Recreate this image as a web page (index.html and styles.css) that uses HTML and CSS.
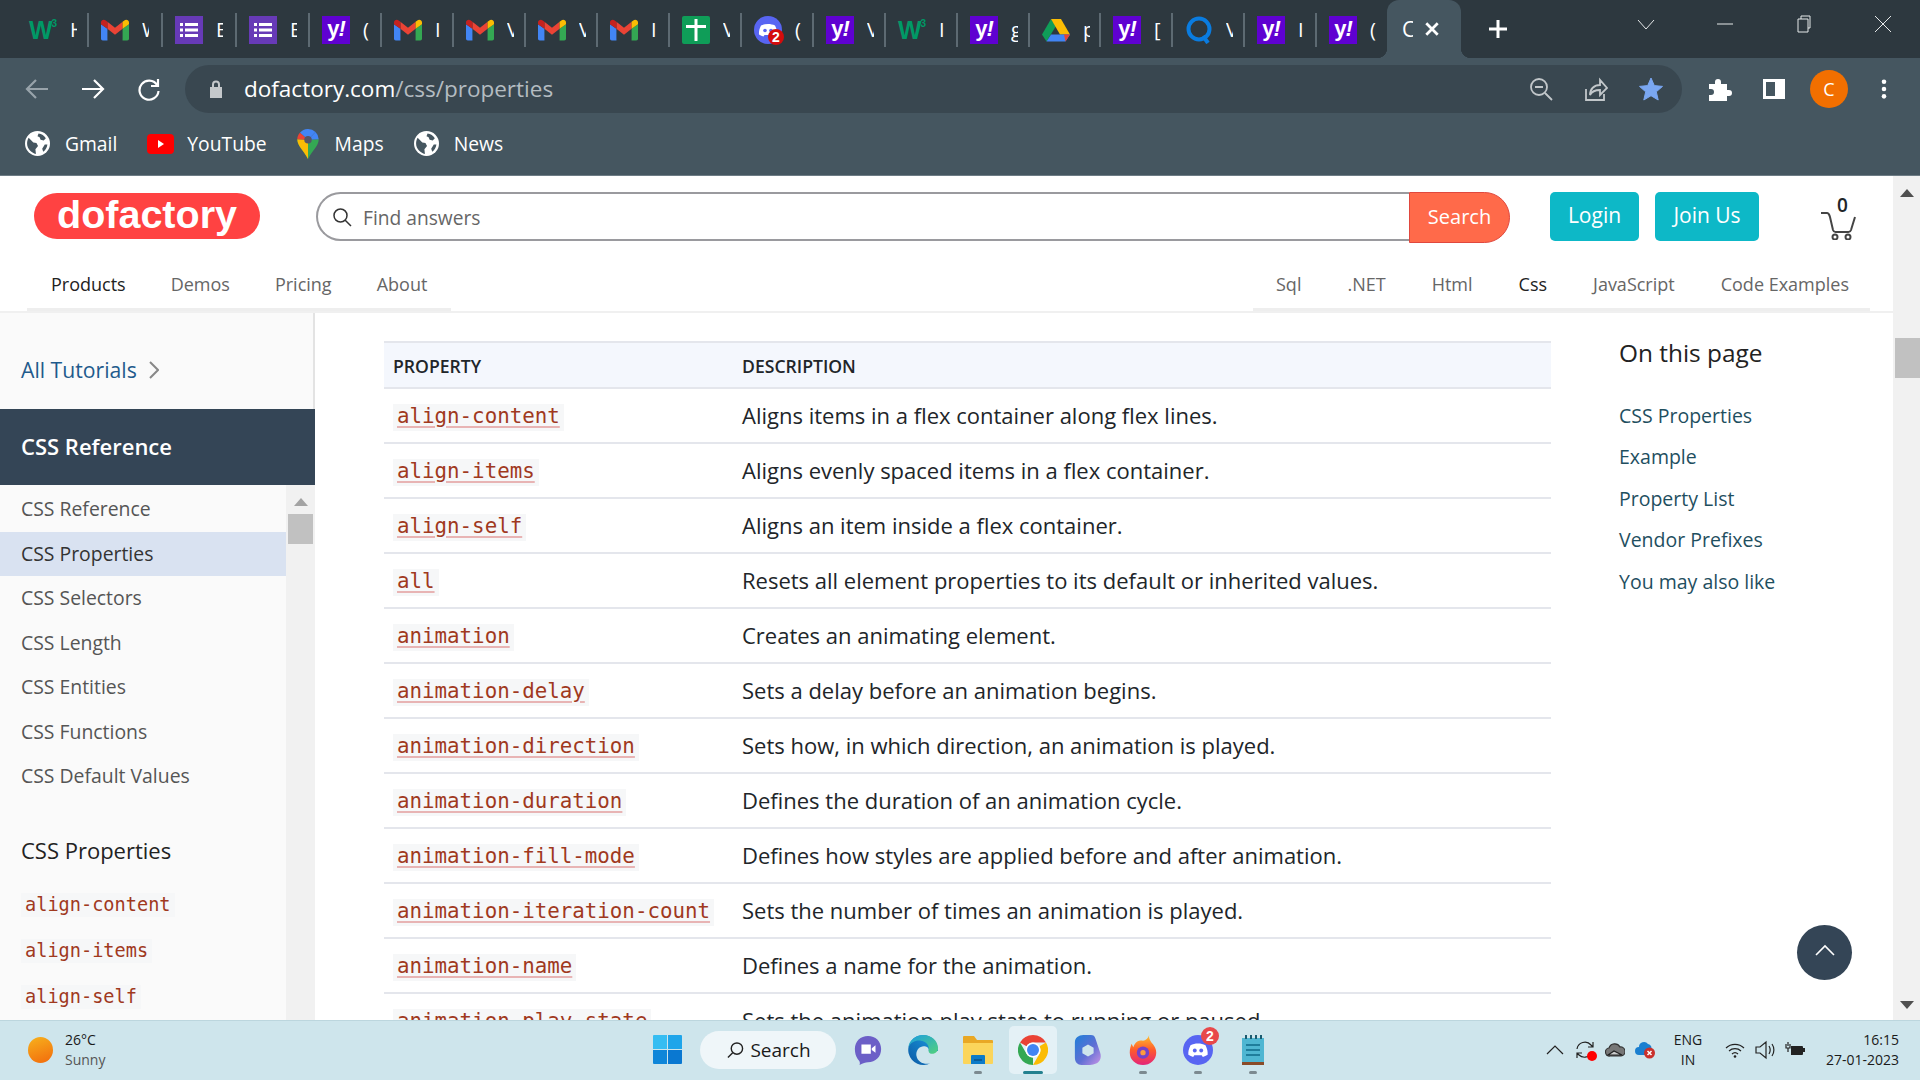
FILE: index.html
```html
<!DOCTYPE html>
<html lang="en">
<head>
    <meta charset="UTF-8">
    <title>CSS Properties - dofactory</title>
    <link rel="stylesheet" href="styles.css">
</head>
<body>
<svg class="defs" width="0" height="0">
    <symbol id="i-gmail" viewBox="0 0 24 18">
        <path fill="#4285f4" d="M0 4v12.5A1.5 1.5 0 0 0 1.5 18h4V8z"/>
        <path fill="#34a853" d="M18.5 8v10h4a1.5 1.5 0 0 0 1.5-1.5V4z"/>
        <path fill="#ea4335" d="M5.5 8 12 13l6.5-5V2L12 7 5.5 2z"/>
        <path fill="#fbbc04" d="M18.5 2v6L24 4V2.5C24 .5 21.5-.5 20 .8z"/>
        <path fill="#c5221f" d="M0 4l5.5 4V2L4 .8C2.5-.5 0 .5 0 2.5z"/>
    </symbol>
    <symbol id="i-forms" viewBox="0 0 28 28">
        <rect width="28" height="28" fill="#673ab7"/>
        <path fill="#fff" d="M5 7h3v3H5zM10 7h13v3H10zM5 12.5h3v3H5zM10 12.5h13v3H10zM5 18h3v3H5zM10 18h13v3H10z"/>
    </symbol>
    <symbol id="i-sheets" viewBox="0 0 28 28">
        <rect width="28" height="28" rx="2" fill="#0f9d58"/>
        <path fill="#fff" d="M4 9h20v3H4zM12.5 3h3v22h-3z"/>
    </symbol>
    <symbol id="i-discord" viewBox="0 0 28 28">
        <circle cx="14" cy="14" r="14" fill="#5865f2"/>
        <path fill="#fff" d="M7 9.5c4-2 10-2 14 0 1.5 3 2.3 6 2 9-1.500 1-3 1.700-4.500 2l-1-1.500h-7l-1 1.500c-1.500-.3-3-1-4.500-2-.3-3 .5-6 2-9z"/>
        <circle cx="11" cy="14.500" r="1.800" fill="#5865f2"/>
        <circle cx="17" cy="14.500" r="1.800" fill="#5865f2"/>
    </symbol>
    <symbol id="i-globe" viewBox="0 0 24 24">
        <circle cx="12" cy="12" r="12" fill="#fff"/>
        <path fill="#455660" d="M3.500 6.500 8 11l3 .5 1.500 3-2.500 3 .5 4.500C6 21 2 17 2 12c0-2 .5-4 1.500-5.500zM13 2.500c3 .3 5.500 2 7 4.500l-2 2-3-.5-1-2.500-2-1zM21.500 13c-.3 3-2 5.500-4 7l-1-3 2.500-4z"/>
    </symbol>
    <symbol id="i-drive" viewBox="0 0 28 26">
        <path fill="#0f9d58" d="M9 2 0 17.500l4.500 7L14 9z"/>
        <path fill="#fbbc04" d="M19 2H9l9 15.500h10z"/>
        <path fill="#4285f4" d="M4.500 24.500h19l4.500-7H9z"/>
        <path fill="#ea4335" d="M23.500 24.500 28 17.500h-6z"/>
    </symbol>
    <symbol id="i-q" viewBox="0 0 28 28">
        <circle cx="14" cy="13" r="10.500" fill="none" stroke="#0a7ce0" stroke-width="4"/>
        <path stroke="#0a7ce0" stroke-width="4" d="M18 20l5 7"/>
    </symbol>
    <symbol id="i-chrome" viewBox="0 0 48 48">
        <path fill="#ea4335" d="M24 4A20 20 0 0 1 41.320 14H24a10 10 0 0 0-8.660 5L6.680 14A20 20 0 0 1 24 4z"/>
        <path fill="#fbbc04" transform="rotate(120 24 24)" d="M24 4A20 20 0 0 1 41.320 14H24a10 10 0 0 0-8.660 5L6.680 14A20 20 0 0 1 24 4z"/>
        <path fill="#34a853" transform="rotate(240 24 24)" d="M24 4A20 20 0 0 1 41.320 14H24a10 10 0 0 0-8.660 5L6.680 14A20 20 0 0 1 24 4z"/>
        <circle cx="24" cy="24" r="10" fill="#fff"/>
        <circle cx="24" cy="24" r="8" fill="#4285f4"/>
    </symbol>
</svg>

<div class="screen">
    <div class="tabstrip">
        <div class="tab"><span class="w3">W<sup>3</sup></span><span class="tab-title">H</span></div>
        <div class="tab w74"><svg class="fav gm"><use href="#i-gmail"/></svg><span class="tab-title">W</span></div>
        <div class="tab w74"><svg class="fav"><use href="#i-forms"/></svg><span class="tab-title">E</span></div>
        <div class="tab w73"><svg class="fav"><use href="#i-forms"/></svg><span class="tab-title">E</span></div>
        <div class="tab"><span class="yahoo">y<i>!</i></span><span class="tab-title">(</span></div>
        <div class="tab"><svg class="fav gm"><use href="#i-gmail"/></svg><span class="tab-title">I</span></div>
        <div class="tab"><svg class="fav gm"><use href="#i-gmail"/></svg><span class="tab-title">V</span></div>
        <div class="tab"><svg class="fav gm"><use href="#i-gmail"/></svg><span class="tab-title">V</span></div>
        <div class="tab"><svg class="fav gm"><use href="#i-gmail"/></svg><span class="tab-title">I</span></div>
        <div class="tab"><svg class="fav"><use href="#i-sheets"/></svg><span class="tab-title">V</span></div>
        <div class="tab"><span class="discord-fav"><svg class="fav"><use href="#i-discord"/></svg><b class="fav-badge">2</b></span><span class="tab-title">(</span></div>
        <div class="tab"><span class="yahoo">y<i>!</i></span><span class="tab-title">V</span></div>
        <div class="tab"><span class="w3">W<sup>3</sup></span><span class="tab-title">I</span></div>
        <div class="tab"><span class="yahoo">y<i>!</i></span><span class="tab-title">g</span></div>
        <div class="tab w71"><svg class="fav"><use href="#i-drive"/></svg><span class="tab-title">p</span></div>
        <div class="tab"><span class="yahoo">y<i>!</i></span><span class="tab-title">[</span></div>
        <div class="tab"><svg class="fav"><use href="#i-q"/></svg><span class="tab-title">V</span></div>
        <div class="tab"><span class="yahoo">y<i>!</i></span><span class="tab-title">I</span></div>
        <div class="tab"><span class="yahoo">y<i>!</i></span><span class="tab-title">(</span></div>
        <div class="tab-active">
            <span class="tab-title">C</span>
            <svg class="tab-close" viewBox="0 0 14 14"><path d="M2 2l10 10M12 2 2 12"/></svg>
        </div>
        <svg class="new-tab" viewBox="0 0 20 20"><path d="M10 1v18M1 10h18"/></svg>
        <div class="win-controls">
            <svg viewBox="0 0 20 20"><path d="M2 6l8 9 8-9"/></svg>
            <svg viewBox="0 0 20 20"><path d="M2 10h16"/></svg>
            <svg viewBox="0 0 20 20"><path d="M4 5h10v13H4zM7 5V2h9v12h-2"/></svg>
            <svg viewBox="0 0 20 20"><path d="M2 2l16 16M18 2 2 18"/></svg>
        </div>
    </div>

    <div class="toolbar">
        <svg class="tb-btn dim" viewBox="0 0 24 24"><path d="M23 12H2M11 3l-9 9 9 9"/></svg>
        <svg class="tb-btn" viewBox="0 0 24 24"><path d="M1 12h21M13 3l9 9-9 9"/></svg>
        <svg class="tb-btn" viewBox="0 0 24 24"><path d="M20 8a9.500 9.500 0 1 0 1.500 6M21 2v7h-7"/></svg>
        <div class="omnibox">
            <svg class="lock" viewBox="0 0 14 18"><path fill="#c4c8cb" d="M1 7h12v11H1z"/><path fill="none" stroke="#c4c8cb" stroke-width="2" d="M4 7V4.500a3 3 0 0 1 6 0V7"/></svg>
            <span class="url">dofactory.com<span class="url-path">/css/properties</span></span>
            <div class="omni-icons">
                <svg viewBox="0 0 24 24"><circle cx="10" cy="10" r="8"/><path d="M6 10h8M16 16l7 7"/></svg>
                <svg viewBox="0 0 24 24"><path d="M2 12v11h18v-6M6 18c0-6 4-10 10-10V3l7 8-7 7v-5c-4 0-8 1-10 5z"/></svg>
                <svg viewBox="0 0 24 24"><path class="star" d="M12 1l3.300 7.600 8.200.8-6.200 5.400 1.900 8.200L12 18.700 4.800 23l1.900-8.200L.5 9.400l8.200-.8z"/></svg>
            </div>
        </div>
        <div class="tb-right">
            <svg class="tb-solid" viewBox="0 0 24 24"><path fill="#fff" d="M2 7h6V5a3 3 0 0 1 6 0v2h6v6h2a3 3 0 0 1 0 6h-2v5H2v-6h2a3 3 0 0 0 0-6H2z"/></svg>
            <svg class="tb-solid" viewBox="0 0 24 24"><path fill="#fff" d="M1 2h22v20H1zM4 5v14h9V5z"/></svg>
            <span class="avatar">C</span>
            <svg class="tb-kebab" viewBox="0 0 6 24"><circle cx="3" cy="4" r="2.500"/><circle cx="3" cy="12" r="2.500"/><circle cx="3" cy="20" r="2.500"/></svg>
        </div>
    </div>

    <div class="bookmarks">
        <div class="bm"><svg class="bm-icon"><use href="#i-globe"/></svg>Gmail</div>
        <div class="bm tight"><svg class="bm-icon yt" viewBox="0 0 27 20"><rect width="27" height="20" rx="4" fill="#f00"/><path fill="#fff" d="M11 6l6 4-6 4z"/></svg>YouTube</div>
        <div class="bm wide"><svg class="bm-icon pin" viewBox="0 0 20 28"><path fill="#34a853" d="M10 28C6 20 0 16 0 9.500L10 10l10-.500C20 16 14 20 10 28z"/><path fill="#fbbc04" d="M10 28C6 20 0 16 0 9.500L10 10z"/><path fill="#4285f4" d="M2.500 3.500A10 10 0 0 1 17 2.800L10 10z"/><path fill="#ea4335" d="M2.500 3.500 10 10l-10-.5c0-2.300 1-4.500 2.500-6z"/><path fill="#4285f4" d="M17 2.800A10 10 0 0 1 20 9.500L10 10z"/><circle cx="10" cy="10" r="3.500" fill="#556"/></svg>Maps</div>
        <div class="bm"><svg class="bm-icon"><use href="#i-globe"/></svg>News</div>
    </div>

    <div class="page">
        <div class="page-main">
            <header class="site-header">
                <div class="header-top">
                    <a class="logo">dofactory</a>
                    <form class="search">
                        <div class="search-box">
                            <svg class="search-icon" viewBox="0 0 20 20"><circle cx="8.500" cy="8.500" r="6.500"/><path d="M13 13l6 6"/></svg>
                            <span class="search-ph">Find answers</span>
                        </div>
                        <div class="search-btn">Search</div>
                    </form>
                    <a class="btn-teal login">Login</a>
                    <a class="btn-teal join">Join Us</a>
                    <div class="cart">
                        <span class="cart-count">0</span>
                        <svg viewBox="0 0 38 30"><path d="M1 3h6c2 0 2 1 3 4l3 13c.5 1.500 1 2 2.500 2h13c1.500 0 2-.5 2.500-2l4-13"/><circle cx="15" cy="27" r="2.500"/><circle cx="28" cy="27" r="2.500"/></svg>
                    </div>
                </div>
                <nav class="site-nav">
                    <div class="nav-group nav-left">
                        <a class="on">Products</a><a>Demos</a><a>Pricing</a><a>About</a>
                    </div>
                    <div class="nav-group nav-right">
                        <a>Sql</a><a>.NET</a><a>Html</a><a class="on">Css</a><a>JavaScript</a><a>Code Examples</a>
                    </div>
                </nav>
            </header>

            <div class="page-body">
                <aside class="sidebar">
                    <div class="side-top">
                        <a class="all-tut">All Tutorials</a>
                        <svg class="all-tut-arrow" viewBox="0 0 10 18"><path d="M1 1l8 8-8 8"/></svg>
                    </div>
                    <div class="side-band">CSS Reference</div>
                    <div class="side-scroll">
                        <div class="side-list">
                            <a class="side-link">CSS Reference</a>
                            <a class="side-link active">CSS Properties</a>
                            <a class="side-link">CSS Selectors</a>
                            <a class="side-link">CSS Length</a>
                            <a class="side-link">CSS Entities</a>
                            <a class="side-link">CSS Functions</a>
                            <a class="side-link">CSS Default Values</a>
                            <h4 class="side-head">CSS Properties</h4>
                            <div class="side-code"><code>align-content</code></div>
                            <div class="side-code"><code>align-items</code></div>
                            <div class="side-code"><code>align-self</code></div>
                        </div>
                        <div class="side-track">
                            <span class="arrow-up small"></span>
                            <span class="side-thumb"></span>
                        </div>
                    </div>
                </aside>

                <main class="content">
                    <table class="prop-table">
                        <thead>
                            <tr><th class="col-prop">Property</th><th>Description</th></tr>
                        </thead>
                        <tbody>
                            <tr><td><code>align-content</code></td><td>Aligns items in a flex container along flex lines.</td></tr>
                            <tr><td><code>align-items</code></td><td>Aligns evenly spaced items in a flex container.</td></tr>
                            <tr><td><code>align-self</code></td><td>Aligns an item inside a flex container.</td></tr>
                            <tr><td><code>all</code></td><td>Resets all element properties to its default or inherited values.</td></tr>
                            <tr><td><code>animation</code></td><td>Creates an animating element.</td></tr>
                            <tr><td><code>animation-delay</code></td><td>Sets a delay before an animation begins.</td></tr>
                            <tr><td><code>animation-direction</code></td><td>Sets how, in which direction, an animation is played.</td></tr>
                            <tr><td><code>animation-duration</code></td><td>Defines the duration of an animation cycle.</td></tr>
                            <tr><td><code>animation-fill-mode</code></td><td>Defines how styles are applied before and after animation.</td></tr>
                            <tr><td><code>animation-iteration-count</code></td><td>Sets the number of times an animation is played.</td></tr>
                            <tr><td><code>animation-name</code></td><td>Defines a name for the animation.</td></tr>
                            <tr><td><code>animation-play-state</code></td><td>Sets the animation play state to running or paused.</td></tr>
                        </tbody>
                    </table>
                    <div class="toc">
                        <h3>On this page</h3>
                        <a>CSS Properties</a>
                        <a>Example</a>
                        <a>Property List</a>
                        <a>Vendor Prefixes</a>
                        <a>You may also like</a>
                    </div>
                </main>
            </div>
        </div>
        <div class="page-scroll">
            <span class="arrow-up"></span>
            <span class="page-thumb"></span>
            <span class="arrow-down"></span>
        </div>
        <a class="to-top"><svg viewBox="0 0 20 12"><path d="M1 11l9-9 9 9"/></svg></a>
    </div>

    <footer class="taskbar">
        <div class="weather">
            <span class="sun"></span>
            <div class="weather-text"><div>26°C</div><div class="dim-text">Sunny</div></div>
        </div>
        <svg class="win-logo" viewBox="0 0 29 29">
            <path fill="#35bdf2" d="M0 1a1 1 0 0 1 1-1h13v14H0z"/>
            <path fill="#1fa5ea" d="M15 0h13a1 1 0 0 1 1 1v13H15z"/>
            <path fill="#0f86d9" d="M0 15h14v14H1a1 1 0 0 1-1-1z"/>
            <path fill="#0a78d1" d="M15 15h14v13a1 1 0 0 1-1 1H15z"/>
        </svg>
        <div class="task-search">
            <svg viewBox="0 0 18 18"><circle cx="10.500" cy="7.500" r="6"/><path d="M6 12l-5 5"/></svg>
            Search
        </div>
        <div class="task-apps">
            <div class="app">
                <svg viewBox="0 0 28 32"><path fill="#6c5fc7" d="M14 1c8 0 14 5.500 14 14s-6 14-14 14c-3 0-5 1-9 3 1-3 0-4-2-6.500C1 23 0 19 0 15 0 6.500 6 1 14 1z"/><path fill="#fff" d="M7 10h10v10H7zM18 14l4-3v8l-4-3z"/></svg>
            </div>
            <div class="app">
                <svg viewBox="0 0 32 32">
                    <defs>
                        <linearGradient id="edge-a" x1="0" y1="1" x2="1" y2="0"><stop offset="0" stop-color="#0c59a4"/><stop offset="1" stop-color="#1b9de2"/></linearGradient>
                        <linearGradient id="edge-b" x1="0" y1="0" x2="1" y2="1"><stop offset="0" stop-color="#1b9de2"/><stop offset="1" stop-color="#52d17c"/></linearGradient>
                    </defs>
                    <path fill="url(#edge-a)" d="M16 0a16 16 0 1 0 8 30c-6 2-14-1-15-8-1-6 4-11 9-10 3 .5 5 3 4 5h10C32 7 25 0 16 0z"/>
                    <path fill="url(#edge-b)" d="M16 0C8 0 1 6 .5 13 3 7 9 5 14 6c6 1 9 5 8 11 0 2 2 3.500 5 3 3-1 5-3 5-6C32 6 25 0 16 0z"/>
                </svg>
            </div>
            <div class="app has-dot">
                <svg viewBox="0 0 30 30"><path fill="#e9a825" d="M0 2a1 1 0 0 1 1-1h10l3 4h15a1 1 0 0 1 1 1v5H0z"/><path fill="#fbd55b" d="M0 8h30v20a1 1 0 0 1-1 1H1a1 1 0 0 1-1-1z"/><path fill="#0c7bc8" d="M8 21a1 1 0 0 1 1-1h12a1 1 0 0 1 1 1v8H8z"/><path fill="#0a5c98" d="M11 24h8v2h-8z"/></svg>
            </div>
            <div class="app current">
                <svg viewBox="4 4 40 40"><use href="#i-chrome" x="0" y="0" width="48" height="48"/></svg>
            </div>
            <div class="app">
                <svg viewBox="0 0 28 32">
                    <defs><linearGradient id="cop" x1="0" y1="0" x2="1" y2="1"><stop offset="0" stop-color="#1f7fd8"/><stop offset=".55" stop-color="#5f6fd4"/><stop offset="1" stop-color="#c993e6"/></linearGradient></defs>
                    <path fill="url(#cop)" fill-rule="evenodd" d="M9 0h8c3 0 4 1 5 4l5 15c2 6-1 11-6 12-2 1-4 1-7 1H7c-4 0-7-3-7-8V8C0 3 4 0 9 0zm5 10-6 3.500v6L14 23l6-3.500v-6z"/>
                </svg>
            </div>
            <div class="app has-dot">
                <svg viewBox="0 0 30 34">
                    <defs><linearGradient id="fx" x1="0" y1="0" x2="0" y2="1"><stop offset="0" stop-color="#ffc22e"/><stop offset=".5" stop-color="#ff5a2c"/><stop offset="1" stop-color="#e3257a"/></linearGradient></defs>
                    <path fill="url(#fx)" d="M22 0c-1 3 1 6 3 9 4 4 5 8 5 11 0 8-7 14-15 14S0 28 0 20c0-4 1-7 2-10l2 4c1-3 2-5 5-7 2-1 4-1 6-.5C18 6 21 4 22 0z"/>
                    <circle cx="15" cy="20" r="7" fill="#7542c9"/>
                    <circle cx="15" cy="20" r="3" fill="#ff9b3d"/>
                </svg>
            </div>
            <div class="app has-dot">
                <svg class="discord-app"><use href="#i-discord"/></svg>
                <b class="app-badge">2</b>
            </div>
            <div class="app has-dot">
                <svg viewBox="0 0 22 30"><path fill="#4fb6d2" d="M0 3h22v24H0z"/><path fill="#1f7d9c" d="M4 9h14v2H4zM4 14h14v2H4zM4 19h14v2H4z"/><path fill="#8a4b28" d="M0 27h22v3H0z"/><path fill="#1a5b70" d="M3 0h2v4H3zM8 0h2v4H8zM13 0h2v4h-2zM18 0h2v4h-2z"/></svg>
            </div>
        </div>
        <div class="tray">
            <svg class="tray-icon" viewBox="0 0 20 20"><path d="M2 14l8-8 8 8"/></svg>
            <span class="tray-slot sync">
                <svg class="tray-icon" viewBox="0 0 20 20"><path d="M2 9a8 8 0 0 1 14-4l2 2M18 2v5h-5M16 14a8 8 0 0 1-12 1l-2-2M2 18v-5h5"/></svg>
                <i class="red-dot"></i>
            </span>
            <svg class="tray-icon" viewBox="0 0 20 14"><path fill="#777" stroke="#333" stroke-width="1.200" d="M5 13a4 4 0 0 1-1-8 6 6 0 0 1 11-1 4.500 4.500 0 0 1 1 9z"/><path fill="#ccc" d="M3 12l6-4 8 4z"/></svg>
            <svg class="tray-icon" viewBox="0 0 20 18"><path fill="#1a7fd0" stroke="none" d="M4 14a4 4 0 0 1 0-8 5 5 0 0 1 9-3 4 4 0 0 1 3 6l-3 5z"/><circle cx="14.500" cy="12" r="5.500" fill="#c9302c" stroke="none"/><path stroke="#fff" stroke-width="1.500" d="M12.500 10l4 4M16.500 10l-4 4"/></svg>
            <div class="lang"><div>ENG</div><div>IN</div></div>
            <svg class="tray-icon wifi" viewBox="0 0 20 16"><path d="M1 6a13 13 0 0 1 18 0M4 9a9 9 0 0 1 12 0M7 12a4.500 4.500 0 0 1 6 0"/><circle cx="10" cy="14.500" r="1.300" fill="#222" stroke="none"/></svg>
            <svg class="tray-icon" viewBox="0 0 20 18"><path d="M1 6h4l6-5v16l-6-5H1zM14 5c1.500 2.500 1.500 5.500 0 8M17 3c2.500 3.500 2.500 8.500 0 12"/></svg>
            <svg class="tray-icon" viewBox="0 0 20 16"><path fill="#222" stroke="none" d="M6 4h11a1 1 0 0 1 1 1v1h2v4h-2v2a1 1 0 0 1-1 1H6z"/><path d="M3 0v4M1 2v4h4V2M3 6v4"/></svg>
            <div class="clock"><div>16:15</div><div>27-01-2023</div></div>
        </div>
    </footer>
</div>
</body>
</html>
```

FILE: styles.css
```css
* {
    box-sizing: border-box;
}
html, body {
    margin: 0;
    height: 100%;
    overflow: hidden;
}
body {
    font-family: "Open Sans", "Noto Sans", sans-serif;
}
a {
    color: inherit;
    text-decoration: none;
}
.defs {
    position: absolute;
}
.screen {
    display: flex;
    flex-direction: column;
    height: 1080px;
}

/* browser chrome */
.tabstrip {
    display: flex;
    flex: none;
    align-items: center;
    height: 58px;
    padding-left: 15px;
    background: #2d383f;
}
.tab {
    display: flex;
    flex: none;
    align-items: center;
    width: 72px;
    height: 34px;
    padding-left: 12px;
    border-left: 2px solid #5d6a72;
    overflow: hidden;
    margin-top: 2px;
}
.tab:first-child {
    border-left-color: transparent;
}
.w74 { width: 74px; }
.w73 { width: 73px; }
.w71 { width: 71px; }
.fav {
    flex: none;
    width: 28px;
    height: 28px;
}
.fav.gm {
    height: 22px;
}
.tab-title {
    flex: none;
    width: 7px;
    margin-left: 13px;
    overflow: hidden;
    color: #fff;
    font-size: 20px;
    line-height: 26px;
}
.w3 {
    flex: none;
    width: 28px;
    color: #009966;
    font: bold 25px "Liberation Sans", sans-serif;
    letter-spacing: -3px;
    white-space: nowrap;
}
.w3 sup {
    font-size: 10px;
    letter-spacing: 0;
    vertical-align: 12px;
    line-height: 0;
    margin-left: 2px;
}
.yahoo {
    flex: none;
    width: 28px;
    height: 28px;
    background: #5f01d1;
    color: #fff;
    font: bold 22px/26px "Liberation Sans", sans-serif;
    letter-spacing: -1px;
    text-align: center;
}
.discord-fav {
    position: relative;
    flex: none;
    width: 28px;
    height: 28px;
}
.fav-badge {
    position: absolute;
    right: -2px;
    bottom: -1px;
    width: 16px;
    height: 16px;
    border-radius: 50%;
    background: #d40c0c;
    color: #fff;
    font: bold 14px/16px "Liberation Sans", sans-serif;
    text-align: center;
}
.tab-active {
    position: relative;
    display: flex;
    flex: none;
    align-items: center;
    width: 74px;
    height: 58px;
    padding-left: 15px;
    border-radius: 12px 12px 0 0;
    background: #455660;
}
.tab-active::before,
.tab-active::after {
    content: "";
    position: absolute;
    bottom: 0;
    width: 10px;
    height: 10px;
}
.tab-active::before {
    left: -10px;
    background: radial-gradient(circle at 0 0, transparent 10px, #455660 10.500px);
}
.tab-active::after {
    right: -10px;
    background: radial-gradient(circle at 100% 0, transparent 10px, #455660 10.500px);
}
.tab-active .tab-title {
    width: 11px;
    margin-left: 0;
    font-size: 21px;
}
.tab-close {
    width: 16px;
    height: 16px;
    margin-left: 11px;
    fill: none;
    stroke: #fff;
    stroke-width: 2.400;
}
.new-tab {
    flex: none;
    width: 20px;
    height: 20px;
    margin-left: 27px;
    fill: none;
    stroke: #fff;
    stroke-width: 3;
}
.win-controls {
    display: flex;
    margin-left: auto;
    gap: 5px;
}
.win-controls svg {
    width: 74px;
    height: 20px;
    margin-top: -10px;
    fill: none;
    stroke: #e6e9ea;
    stroke-width: 1;
}

.toolbar {
    display: flex;
    flex: none;
    align-items: center;
    gap: 20px;
    height: 60px;
    padding: 1px 18px 0 19px;
    background: #455660;
}
.tb-btn {
    flex: none;
    width: 36px;
    height: 24px;
    fill: none;
    stroke: #fff;
    stroke-width: 2.200;
}
.tb-btn.dim {
    stroke: #98a3aa;
}
.omnibox {
    display: flex;
    flex: 1;
    align-items: center;
    height: 48px;
    margin-left: -2px;
    padding: 0 19px 0 24px;
    border-radius: 24px;
    background: #394750;
}
.lock {
    flex: none;
    width: 14px;
    height: 18px;
}
.url {
    margin-left: 21px;
    color: #fff;
    font-size: 22.500px;
}
.url-path {
    color: #b4bcc1;
}
.omni-icons {
    display: flex;
    margin-left: auto;
    gap: 31px;
}
.omni-icons svg {
    width: 24px;
    height: 24px;
    fill: none;
    stroke: #c2c7ca;
    stroke-width: 1.800;
}
.omni-icons .star {
    fill: #7aa7f2;
    stroke: #7aa7f2;
    stroke-width: 1;
}
.tb-right {
    display: flex;
    flex: none;
    align-items: center;
    gap: 19px;
    margin-left: -1px;
}
.tb-solid,
.avatar,
.tb-kebab {
    flex: none;
    width: 36px;
    height: 28px;
}
.tb-solid {
    height: 24px;
}
.avatar {
    width: 38px;
    height: 38px;
    margin: 0 -1px;
    border-radius: 50%;
    background: #f26f00;
    color: #fff;
    font-size: 18px;
    line-height: 38px;
    text-align: center;
}
.tb-kebab {
    height: 22px;
    fill: #fff;
}

.bookmarks {
    display: flex;
    flex: none;
    align-items: center;
    gap: 30px;
    height: 58px;
    padding: 0 0 6px 25px;
    border-bottom: 1px solid #6d7c85;
    background: #455660;
    color: #fff;
    font-size: 19.300px;
}
.bm {
    display: flex;
    align-items: center;
    gap: 15px;
}
.bm.tight {
    gap: 13px;
}
.bm.wide {
    gap: 16px;
}
.bm-icon {
    width: 25px;
    height: 25px;
}
.bm-icon.yt {
    width: 27px;
    height: 20px;
}
.bm-icon.pin {
    width: 22px;
    height: 30px;
}

/* page */
.page {
    position: relative;
    display: flex;
    flex: 1;
    min-height: 0;
    color: #212529;
    background: #fff;
}
.page-main {
    display: flex;
    flex: 1;
    flex-direction: column;
    min-width: 0;
}
.site-header {
    flex: none;
    height: 137px;
    border-bottom: 2px solid #f0f0f0;
}
.header-top {
    display: flex;
    align-items: center;
    height: 51px;
    margin-top: 16px;
    padding-left: 34px;
}
.logo {
    flex: none;
    width: 226px;
    height: 46px;
    margin-top: -3px;
    border-radius: 23px;
    background: #ff4242;
    color: #fff;
    font: bold 39.500px/42px "Liberation Sans", sans-serif;
    text-align: center;
}
.search {
    display: flex;
    flex: none;
    width: 1194px;
    height: 51px;
    margin-left: 56px;
}
.search-box {
    display: flex;
    flex: 1;
    align-items: center;
    height: 49px;
    padding-left: 14px;
    border: 2px solid #9a9a9e;
    border-right: 0;
    border-radius: 25px 0 0 25px;
}
.search-icon {
    width: 20px;
    height: 20px;
    fill: none;
    stroke: #333;
    stroke-width: 1.500;
}
.search-ph {
    margin-left: 11px;
    padding-top: 2px;
    color: #666;
    font-size: 19.200px;
}
.search-btn {
    flex: none;
    width: 101px;
    border: 1px solid #e0483e;
    border-radius: 0 26px 26px 0;
    background: #ff6a4a;
    color: #fff;
    font-size: 20px;
    line-height: 47px;
    text-align: center;
}
.btn-teal {
    flex: none;
    height: 49px;
    margin-top: -2px;
    border-radius: 5px;
    background: #0db8c7;
    color: #fff;
    font-size: 21px;
    line-height: 47px;
    text-align: center;
}
.login {
    width: 89px;
    margin-left: 40px;
}
.join {
    width: 104px;
    margin-left: 16px;
}
.cart {
    position: relative;
    flex: none;
    width: 38px;
    height: 40px;
    margin-left: 61px;
}
.cart svg {
    position: absolute;
    left: 0;
    bottom: -2px;
    width: 38px;
    height: 30px;
    fill: none;
    stroke: #444;
    stroke-width: 2;
}
.cart-count {
    position: absolute;
    left: 17px;
    top: -6px;
    font-size: 19px;
    font-weight: 600;
}
.site-nav {
    display: flex;
    justify-content: space-between;
    height: 68px;
    padding-right: 23px;
    color: #666;
    font-size: 18px;
}
.nav-group {
    display: flex;
    align-items: center;
    gap: 45px;
    padding-top: 17px;
    border-bottom: 3px solid #eee;
}
.nav-left {
    margin-left: 27px;
    padding-left: 24px;
    padding-right: 24px;
}
.nav-right {
    padding-left: 23px;
    padding-right: 21px;
    gap: 46px;
}
.site-nav .on {
    color: #222;
}
.page-body {
    display: flex;
    flex: 1;
    min-height: 0;
}
.sidebar {
    display: flex;
    flex: none;
    flex-direction: column;
    width: 315px;
}
.side-top {
    display: flex;
    flex: none;
    align-items: center;
    height: 96px;
    padding: 17px 0 0 21px;
    border-right: 2px solid #e3e3e3;
    background: #fafafa;
}
.all-tut {
    color: #1f5a8c;
    font-size: 21.200px;
}
.all-tut-arrow {
    width: 10px;
    height: 18px;
    margin-left: 12px;
    fill: none;
    stroke: #888;
    stroke-width: 2;
}
.side-band {
    flex: none;
    height: 76px;
    padding-left: 21px;
    background: #344556;
    color: #fff;
    font-size: 22px;
    font-weight: 600;
    line-height: 74px;
}
.side-scroll {
    display: flex;
    flex: 1;
    min-height: 0;
}
.side-list {
    flex: 1;
    padding-top: 2px;
    overflow: hidden;
    background: #fafafa;
}
.side-link {
    display: block;
    height: 44.500px;
    padding-left: 21px;
    color: #555;
    font-size: 19.400px;
    line-height: 44.500px;
}
.side-link.active {
    background: #d9e2f1;
    color: #333;
}
.side-head {
    margin: 36px 0 28px 21px;
    color: #222;
    font-size: 22px;
    font-weight: 500;
    line-height: 30px;
}
.side-code {
    height: 46px;
    padding-left: 21px;
}
.side-code code {
    display: inline-block;
    height: 24px;
    padding: 0 4px;
    background: #f6f7f8;
    color: #a0391e;
    font: 18.600px/24px "DejaVu Sans Mono", monospace;
}
.side-track {
    display: flex;
    flex: none;
    flex-direction: column;
    align-items: center;
    width: 29px;
    padding-top: 13px;
    background: #f1f1f1;
}
.side-thumb {
    width: 25px;
    height: 30px;
    margin-top: 8px;
    background: #c1c1c1;
}
.arrow-up,
.arrow-down {
    width: 0;
    height: 0;
    border-left: 7px solid transparent;
    border-right: 7px solid transparent;
}
.arrow-up {
    border-bottom: 8px solid #505050;
}
.arrow-up.small {
    border-bottom-color: #a3a3a3;
}
.arrow-down {
    margin-top: auto;
    margin-bottom: 11px;
    border-top: 8px solid #505050;
}
.content {
    display: flex;
    flex: 1;
    min-width: 0;
    padding: 28px 0 0 69px;
    overflow: hidden;
}
.prop-table {
    flex: none;
    align-self: flex-start;
    width: 1167px;
    border-collapse: collapse;
    table-layout: fixed;
    font-size: 22px;
}
.prop-table th {
    height: 46px;
    padding: 2px 9px 0;
    border-top: 2px solid #e4e6ec;
    border-bottom: 2px solid #e4e6ec;
    background: #f4f7fd;
    font-size: 17.600px;
    font-weight: 600;
    text-align: left;
    text-transform: uppercase;
}
.col-prop {
    width: 349px;
}
.prop-table td {
    height: 55px;
    padding: 0 9px 2px;
    border-bottom: 2px solid #e4e6ec;
    white-space: nowrap;
}
.prop-table code {
    display: inline-block;
    height: 27px;
    padding: 0 4px;
    background: #f6f7f8;
    color: #a0391e;
    font: 20.800px/24px "DejaVu Sans Mono", monospace;
    text-decoration: underline;
    text-decoration-color: #e8b4b4;
    text-decoration-thickness: 2px;
    text-underline-offset: 3px;
}
.toc {
    flex: none;
    margin-left: 68px;
}
.toc h3 {
    margin: -1px 0 29px;
    color: #222;
    font-size: 24.400px;
    font-weight: 500;
    line-height: 26px;
}
.toc a {
    display: block;
    color: #1f4f5f;
    font-size: 19.500px;
    line-height: 41.400px;
}
.page-scroll {
    display: flex;
    flex: none;
    flex-direction: column;
    align-items: center;
    width: 27px;
    padding-top: 13px;
    background: #f1f1f1;
}
.page-thumb {
    width: 25px;
    height: 40px;
    margin: 141px 0 0 2px;
    background: #c1c1c1;
}
.to-top {
    position: absolute;
    left: 1797px;
    top: 749px;
    display: flex;
    align-items: center;
    justify-content: center;
    width: 55px;
    height: 55px;
    border-radius: 50%;
    background: #344556;
}
.to-top svg {
    width: 20px;
    height: 12px;
    margin-top: -5px;
    fill: none;
    stroke: #fff;
    stroke-width: 1.600;
}

/* windows taskbar */
.taskbar {
    display: flex;
    flex: none;
    align-items: center;
    height: 60px;
    padding-bottom: 2px;
    border-top: 1px solid #bcd6de;
    background: #cee5ec;
    color: #1a1a1a;
    font-size: 14px;
}
.weather {
    display: flex;
    flex: none;
    align-items: center;
    width: 653px;
    padding-left: 28px;
}
.sun {
    width: 25px;
    height: 26px;
    border-radius: 50%;
    background: linear-gradient(160deg, #f7b21d, #f26a0c);
}
.weather-text {
    margin-left: 12px;
    line-height: 20px;
}
.dim-text {
    color: #555;
}
.win-logo {
    flex: none;
    width: 29px;
    height: 29px;
}
.task-search {
    display: flex;
    flex: none;
    align-items: center;
    justify-content: center;
    gap: 6px;
    width: 136px;
    height: 38px;
    margin-left: 18px;
    padding-left: 2px;
    border-radius: 19px;
    background: #eff6f9;
    font-size: 19px;
}
.task-search svg {
    width: 17px;
    height: 18px;
    fill: none;
    stroke: #222;
    stroke-width: 1.500;
}
.task-apps {
    display: flex;
    flex: none;
    gap: 7px;
    margin-left: 8px;
}
.app {
    position: relative;
    display: flex;
    align-items: center;
    justify-content: center;
    width: 48px;
    height: 48px;
    border-radius: 5px;
}
.app svg {
    width: 30px;
    height: 30px;
}
.app.current {
    background: #e4f1f6;
}
.app.has-dot::after,
.app.current::after {
    content: "";
    position: absolute;
    bottom: 0;
    left: 20px;
    width: 8px;
    height: 3px;
    border-radius: 2px;
    background: #7c8a90;
}
.app.current::after {
    left: 14px;
    width: 20px;
    background: #24818f;
}
.app-badge {
    position: absolute;
    top: 1px;
    right: 3px;
    width: 18px;
    height: 18px;
    border-radius: 50%;
    background: #e8484a;
    color: #fff;
    font: bold 14px/18px "Liberation Sans", sans-serif;
    text-align: center;
}
.tray {
    display: flex;
    flex: none;
    align-items: center;
    margin-left: auto;
    padding-right: 21px;
}
.tray-icon {
    flex: none;
    width: 20px;
    height: 20px;
    margin: 0 5px;
    fill: none;
    stroke: #222;
    stroke-width: 1.200;
}
.tray-slot {
    position: relative;
    display: flex;
}
.red-dot {
    position: absolute;
    right: 3px;
    bottom: -1px;
    width: 10px;
    height: 10px;
    border-radius: 50%;
    background: #f00;
}
.lang {
    flex: none;
    width: 56px;
    margin-right: 4px;
    line-height: 20px;
    text-align: center;
}
.clock {
    flex: none;
    width: 89px;
    line-height: 20px;
    text-align: right;
}
```
